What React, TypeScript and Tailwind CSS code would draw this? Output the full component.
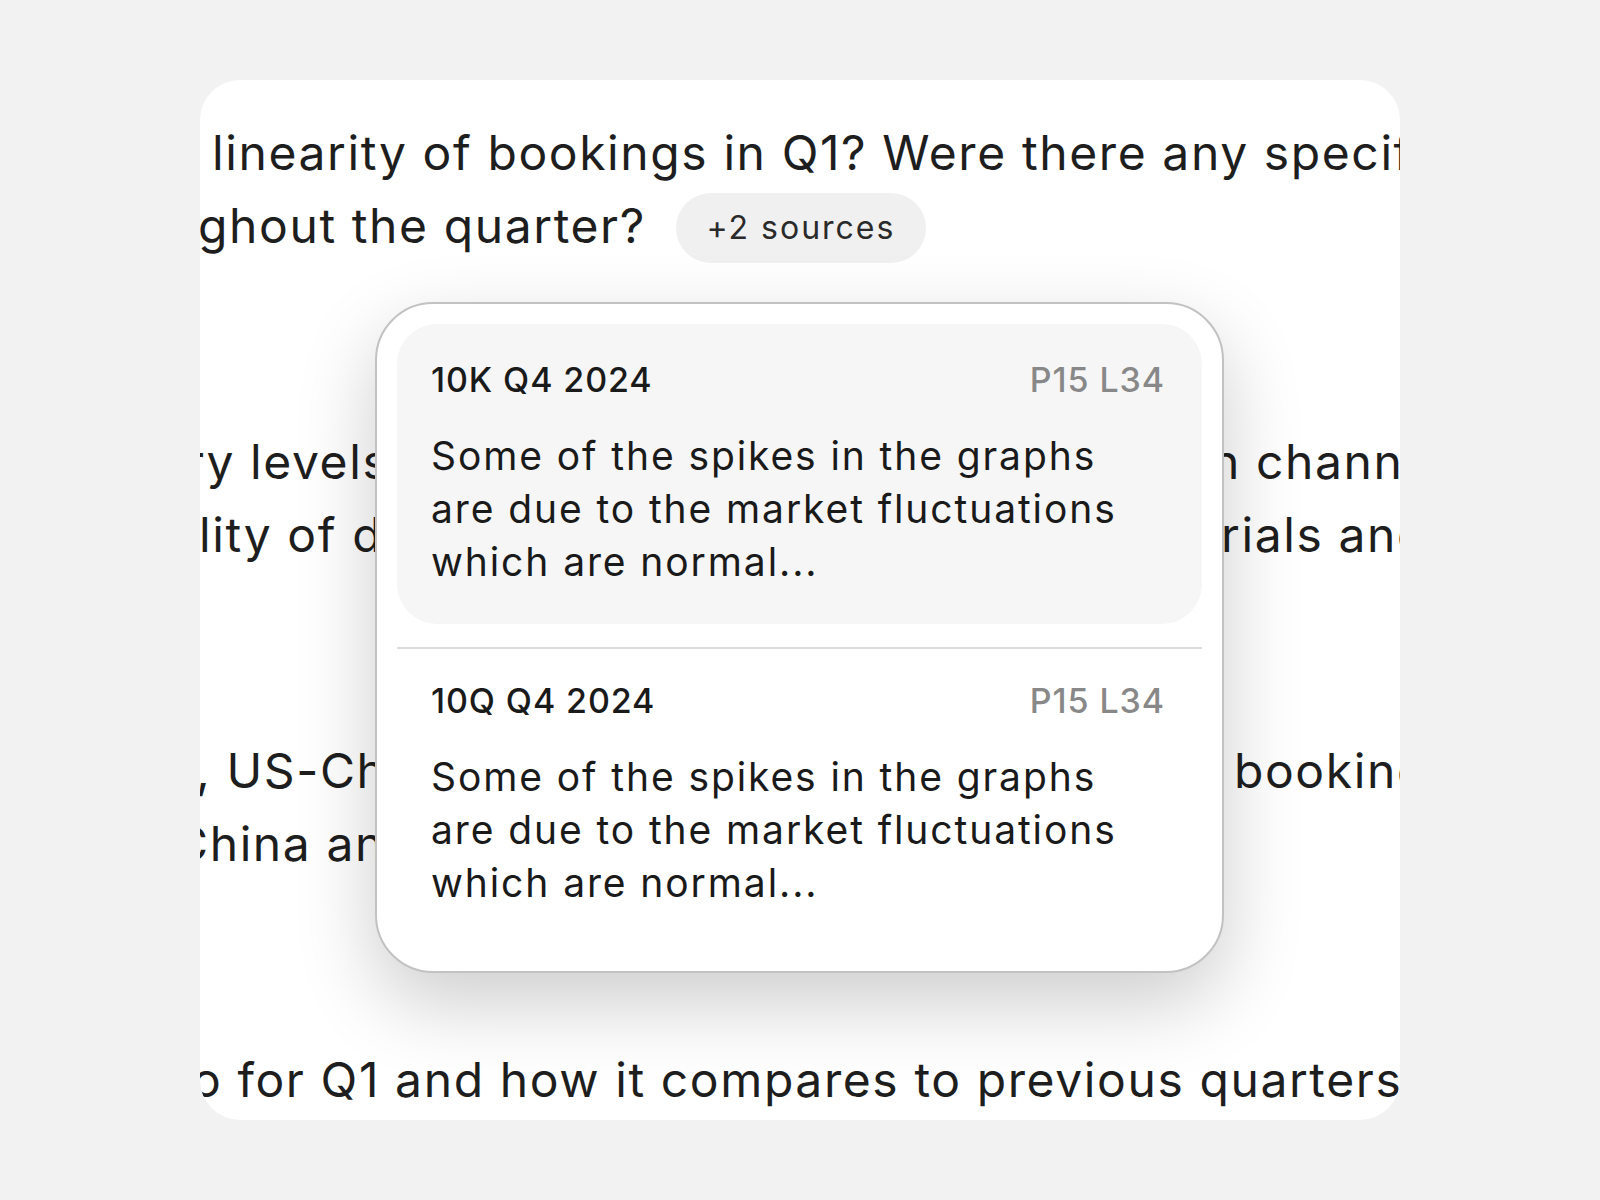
import type { ReactNode } from "react"

type Source = {
  title: string
  loc: string
  excerpt: string[]
}

const sources: Source[] = [
  {
    title: "10K Q4 2024",
    loc: "P15 L34",
    excerpt: [
      "Some of the spikes in the graphs",
      "are due to the market fluctuations",
      "which are normal...",
    ],
  },
  {
    title: "10Q Q4 2024",
    loc: "P15 L34",
    excerpt: [
      "Some of the spikes in the graphs",
      "are due to the market fluctuations",
      "which are normal...",
    ],
  },
]

function Line({ children }: { children: ReactNode }) {
  return (
    <div className="flex h-[73px] items-center whitespace-nowrap">
      {children}
    </div>
  )
}

function SourceItem({ source, first }: { source: Source; first?: boolean }) {
  return (
    <div
      className={
        first
          ? "rounded-[40px] bg-[#f6f6f6] pb-[36px] pl-[34px] pr-[37px] pt-[35px]"
          : "pb-[35px] pl-[34px] pr-[37px] pt-[31px]"
      }
    >
      <div className="flex h-[40px] items-center justify-between text-[34px] font-medium tracking-[0.9px]">
        <span className="text-[#1a1a1a]">{source.title}</span>
        <span className="text-[#888888]">{source.loc}</span>
      </div>
      <div className="mt-[30px] text-[39px] leading-[53px] tracking-[1.9px] text-[#1a1a1a]">
        {source.excerpt.map((l) => (
          <div key={l}>{l}</div>
        ))}
      </div>
    </div>
  )
}

export default function App() {
  return (
    <div className="min-h-screen bg-[#f2f2f2] pt-[80px] font-['Inter',sans-serif]">
      <div className="relative mx-auto h-[1040px] w-[1200px] overflow-hidden rounded-[40px] bg-white">
        <div className="pt-[36px] text-[48px] tracking-[1.6px] text-[#1e1e1e]">
          <div className="mb-[163px]">
            <Line>
              <span className="ml-[12px]">
                linearity of bookings in Q1? Were there any specific
              </span>
            </Line>
            <Line>
              <span className="-ml-[2px]">ghout the quarter?</span>
              <span className="ml-[30px] mt-[5px] flex h-[70px] w-[250px] items-center justify-center rounded-full bg-[#f0f0f0] text-[32px] tracking-[2px] text-[#2a2a2a]">
                +2 sources
              </span>
            </Line>
          </div>

          <div className="mb-[163px]">
            <div className="grid h-[73px] grid-cols-[1011px_auto] items-center whitespace-nowrap">
              <span className="-ml-[14px]">ry levels of inventory</span>
              <span>n channels</span>
            </div>
            <div className="grid h-[73px] grid-cols-[1021px_auto] items-center whitespace-nowrap">
              <span className="-ml-[1px]">lity of demand</span>
              <span>rials and</span>
            </div>
          </div>

          <div className="mb-[163px]">
            <div className="grid h-[73px] grid-cols-[1034px_auto] items-center whitespace-nowrap">
              <span className="-ml-[4px]">, US-China trade</span>
              <span>bookings</span>
            </div>
            <Line>
              <span className="-ml-[27px]">China and</span>
            </Line>
          </div>

          <Line>
            <span className="-ml-[8px]">
              o for Q1 and how it compares to previous quarters
            </span>
          </Line>
        </div>

        <div className="absolute left-[175px] top-[222px] w-[849px] rounded-[58px] border-2 border-[#c2c2c2] bg-white px-[20px] pb-[27px] pt-[20px] shadow-[0_30px_80px_rgba(0,0,0,0.2)]">
          <SourceItem source={sources[0]} first />
          <div className="mt-[23px] h-[2px] bg-[#dcdcdc]" />
          <SourceItem source={sources[1]} />
        </div>
      </div>
    </div>
  )
}
